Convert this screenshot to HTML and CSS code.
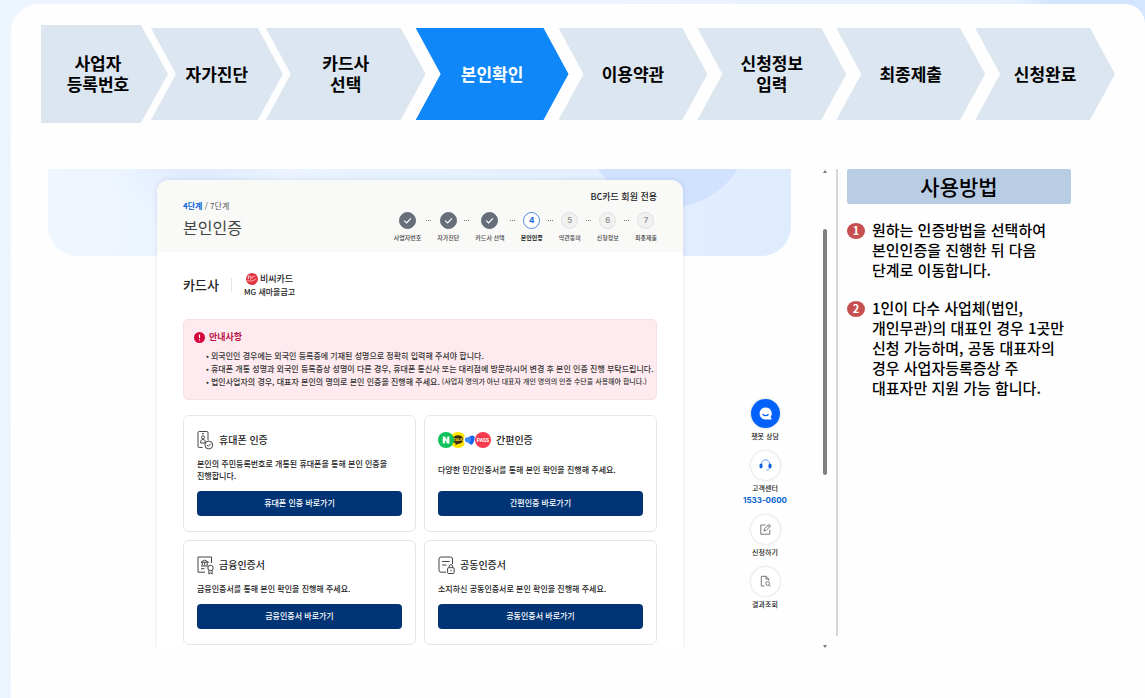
FILE: index.html
```html
<!DOCTYPE html>
<html lang="ko">
<head>
    <meta charset="UTF-8">
    <meta name="viewport" content="width=device-width, initial-scale=1.0">
    <title>본인확인 - 사용방법</title>
    <link rel="stylesheet" href="styles.css">
</head>
<body>
    <div class="sheet">
        <ol class="flow">
            <li class="flow-step first">사업자<br>등록번호</li>
            <li class="flow-step second">자가진단</li>
            <li class="flow-step third">카드사<br>선택</li>
            <li class="flow-step active" aria-current="step">본인확인</li>
            <li class="flow-step">이용약관</li>
            <li class="flow-step">신청정보<br>입력</li>
            <li class="flow-step">최종제출</li>
            <li class="flow-step last">신청완료</li>
        </ol>

        <div class="workspace">
            <div class="stage">
                <div class="hero"></div>
                <main class="card">
                    <header class="card-header">
                        <div class="card-title">
                            <p class="step-count"><strong>4단계</strong> / 7단계</p>
                            <h1>본인인증</h1>
                        </div>
                        <div class="card-progress">
                            <p class="member">BC카드 회원 전용</p>
                            <ol class="progress">
                                <li class="done"><span class="dot"><svg viewBox="0 0 17 17"><path d="M5.2 8.6l2.4 2.3 4.3-4.6"/></svg></span>사업자번호</li>
                                <li class="sep" aria-hidden="true"></li>
                                <li class="done"><span class="dot"><svg viewBox="0 0 17 17"><path d="M5.2 8.6l2.4 2.3 4.3-4.6"/></svg></span>자가진단</li>
                                <li class="sep" aria-hidden="true"></li>
                                <li class="done"><span class="dot"><svg viewBox="0 0 17 17"><path d="M5.2 8.6l2.4 2.3 4.3-4.6"/></svg></span>카드사 선택</li>
                                <li class="sep" aria-hidden="true"></li>
                                <li class="current"><span class="dot">4</span>본인인증</li>
                                <li class="sep" aria-hidden="true"></li>
                                <li><span class="dot">5</span>약관동의</li>
                                <li class="sep" aria-hidden="true"></li>
                                <li><span class="dot">6</span>신청정보</li>
                                <li class="sep" aria-hidden="true"></li>
                                <li><span class="dot">7</span>최종제출</li>
                            </ol>
                        </div>
                    </header>

                    <div class="card-body">
                        <div class="issuer">
                            <h2>카드사</h2>
                            <div class="issuer-name">
                                <span class="issuer-brand">
                                    <svg class="bc-logo" viewBox="0 0 12 12">
                                        <circle cx="6" cy="6" r="6" fill="#e2343f"/>
                                        <path d="M2.400 6V3.200c1.800-.7 3 .2 2.200 1.300 1.200.2 1 1.700-.6 1.700M8.600 3.600c-1.500-.6-2.600.4-2.300 1.400" fill="none" stroke="#fff" stroke-width=".8"/>
                                        <path d="M1.200 7.200c2.800 1.500 6.200.9 9-1.600" fill="none" stroke="#fff" stroke-width=".6"/>
                                    </svg>
                                    비씨카드
                                </span>
                                <span class="issuer-bank">MG 새마을금고</span>
                            </div>
                        </div>

                        <section class="notice">
                            <h3>
                                <svg viewBox="0 0 11 11"><circle cx="5.5" cy="5.5" r="5.5" fill="#d3073c"/><path d="M5.5 2.600v3.400M5.5 7.300v1.200" stroke="#fff" stroke-width="1.1"/></svg>
                                안내사항
                            </h3>
                            <ul>
                                <li>외국인인 경우에는 외국인 등록증에 기재된 성명으로 정확히 입력해 주셔야 합니다.</li>
                                <li>휴대폰 개통 성명과 외국인 등록증상 성명이 다른 경우, 휴대폰 통신사 또는 대리점에 방문하시어 변경 후 본인 인증 진행 부탁드립니다.</li>
                                <li>법인사업자의 경우, 대표자 본인의 명의로 본인 인증을 진행해 주세요. <small>(사업자 명의가 아닌 대표자 개인 명의의 인증 수단을 사용해야 합니다.)</small></li>
                            </ul>
                        </section>

                        <div class="methods">
                            <section class="method">
                                <h3>
                                    <svg class="line-icon" viewBox="0 0 17 20">
                                        <path d="M5.5 17.5H2.2A1.2 1.2 0 0 1 1 16.300V2.700a1.2 1.2 0 0 1 1.2-1.2h7.600A1.2 1.2 0 0 1 11 2.700v7.600M5 3.800h2"/>
                                        <circle cx="6" cy="7.400" r="1.5"/>
                                        <path d="M3.700 13v-1.2c0-1.600 1-2.300 2.300-2.300s2.300.7 2.300 2.300V13z"/>
                                        <circle cx="11.800" cy="15" r="3.900"/>
                                        <path d="M9.900 15l1.400 1.400 2.5-2.700"/>
                                    </svg>
                                    휴대폰 인증
                                </h3>
                                <p>본인의 주민등록번호로 개통된 휴대폰을 통해 본인 인증을 진행합니다.</p>
                                <button type="button">휴대폰 인증 바로가기</button>
                            </section>

                            <section class="method">
                                <h3>
                                    <svg class="brand-icons" viewBox="0 0 53 18">
                                        <circle cx="20" cy="9" r="8" fill="#fee500"/>
                                        <ellipse cx="20" cy="8.5" rx="5.3" ry="4.2" fill="#3a2a1a"/>
                                        <path d="M18 11l-.6 3.2 3.6-2z" fill="#3a2a1a"/>
                                        <text x="20" y="10" font-size="4" fill="#fee500">TALK</text>
                                        <circle cx="8" cy="9" r="8" fill="#0ec25c"/>
                                        <path d="M4.7 12.5v-7h2.2l2.3 3.5V5.5h2.2v7H9.200L6.900 9v3.5z" fill="#fff"/>
                                        <circle cx="33" cy="9" r="7.5" fill="#fff"/>
                                        <path d="M27 9c0-1.800 1-2.300 2.500-2.400 1.200 0 2.100-.6 2.900-1.500 1.500-1.400 4-.6 4.200 1.200.3 2.300-.5 4.800-2.100 6.700-1.200 1.400-2.400.3-3.400-.7C29.500 10.700 27 11 27 9z" fill="#1766ef"/>
                                        <path d="M27 9c0-1.800 1-2.300 2.500-2.400 1.200 0 2.100-.6 2.900-1.500l.6 3.700-1.900 3.500C29.500 10.700 27 11 27 9z" fill="#3f8cf8"/>
                                        <circle cx="45" cy="9" r="8" fill="#f53c4e"/>
                                        <text x="45" y="11" font-size="5" fill="#fff">PASS</text>
                                    </svg>
                                    간편인증
                                </h3>
                                <p>다양한 민간인증서를 통해 본인 확인을 진행해 주세요.</p>
                                <button type="button">간편인증 바로가기</button>
                            </section>

                            <section class="method">
                                <h3>
                                    <svg class="line-icon" viewBox="0 0 17 20">
                                        <path d="M8 17.2H1V2h13.5v6M4 13.700h3.5"/>
                                        <path d="M4 7.200L7.700 5l3.800 2.200zM5.300 7.500v3M7.700 7.500v3M10.200 7.500v3M4 11h7.5"/>
                                        <circle cx="13.5" cy="13" r="2.700"/>
                                        <path d="M11.900 15.300v3.700l1.600-1 1.600 1v-3.700"/>
                                    </svg>
                                    금융인증서
                                </h3>
                                <p>금융인증서를 통해 본인 확인을 진행해 주세요.</p>
                                <button type="button">금융인증서 바로가기</button>
                            </section>

                            <section class="method">
                                <h3>
                                    <svg class="line-icon" viewBox="0 0 17 20">
                                        <path d="M8 17.2H3a2 2 0 0 1-2-2V4a2 2 0 0 1 2-2h9.500a2 2 0 0 1 2 2v5M4 6.500h7.500M4 10h4.500"/>
                                        <rect x="9.600" y="12.700" width="6.600" height="5.800" rx="1"/>
                                        <path d="M11.100 12.700v-1.200a1.800 1.800 0 0 1 3.600 0v1.200M12.900 15v1.300"/>
                                    </svg>
                                    공동인증서
                                </h3>
                                <p>소지하신 공동인증서로 본인 확인을 진행해 주세요.</p>
                                <button type="button">공동인증서 바로가기</button>
                            </section>
                        </div>
                    </div>
                </main>

                <nav class="quick" aria-label="빠른 메뉴">
                    <a href="#chat">
                        <span class="quick-icon chat">
                            <svg viewBox="0 0 29 29">
                                <path d="M14.500 8.500a6 6 0 1 0 0 12h6v-1.300l-.9-1.200a6 6 0 0 0-5.100-9.500z" fill="#fff"/>
                                <path d="M12 15.500c1.400 1.600 3.900 1.600 5.200 0" fill="none" stroke="#0561fc" stroke-width="1.2" stroke-linecap="round"/>
                            </svg>
                        </span>
                        챗봇 상담
                    </a>
                    <a href="#center">
                        <span class="quick-icon">
                            <svg viewBox="0 0 29 29">
                                <path d="M10.300 14v-.5a4.200 4.700 0 0 1 8.400 0v.5M18.700 16.500c0 1.800-1.500 2.600-3.300 2.600" fill="none" stroke="#5c9bf5" stroke-width="1"/>
                                <rect x="8.500" y="12.700" width="3" height="4.600" rx="1.400" fill="#0b5fe0"/>
                                <rect x="17.500" y="12.700" width="3" height="4.600" rx="1.400" fill="#0b5fe0"/>
                            </svg>
                        </span>
                        고객센터
                        <strong>1533-0600</strong>
                    </a>
                    <a href="#apply">
                        <span class="quick-icon">
                            <svg viewBox="0 0 29 29">
                                <path d="M14.500 10h-4.700v9.200h9V14.800M13 16l.4-2.200 4.500-4.500 1.700 1.700-4.500 4.500zM16.800 10.400l1.700 1.700" fill="none" stroke="#666" stroke-width=".9"/>
                            </svg>
                        </span>
                        신청하기
                    </a>
                    <a href="#result">
                        <span class="quick-icon">
                            <svg viewBox="0 0 29 29">
                                <path d="M13.500 19h-3.200V9.300h4.700l2.800 2.800v1.500M15 9.300v2.800h2.800" fill="none" stroke="#666" stroke-width=".9"/>
                                <circle cx="16.600" cy="16.500" r="1.800" fill="none" stroke="#666" stroke-width=".9"/>
                                <path d="M18 17.900l1.600 1.600" stroke="#666" stroke-width=".9"/>
                            </svg>
                        </span>
                        결과조회
                    </a>
                </nav>
            </div>

            <div class="scrollbar" aria-hidden="true">
                <span class="arrow-up"></span>
                <span class="thumb"></span>
                <span class="arrow-down"></span>
            </div>

            <aside class="guide">
                <h2>사용방법</h2>
                <ol>
                    <li><span class="num">1</span><p>원하는 인증방법을 선택하여 본인인증을 진행한 뒤 다음 단계로 이동합니다.</p></li>
                    <li><span class="num">2</span><p>1인이 다수 사업체(법인, 개인무관)의 대표인 경우 1곳만 신청 가능하며, 공동 대표자의 경우 사업자등록증상 주 대표자만 지원 가능 합니다.</p></li>
                </ol>
            </aside>
        </div>
    </div>
</body>
</html>
```
FILE: styles.css
```css
* {
    box-sizing: border-box;
}
body {
    margin: 0;
    min-height: 100vh;
    display: flex;
    padding: 4px 0 0 11px;
    background: linear-gradient(100deg, #edf5ff 0%, #e8f2ff 80%, #d4e5fe 83%);
    font-family: "Noto Sans CJK KR", "Noto Sans", sans-serif;
    color: #222;
    word-break: keep-all;
}
h1, h2, h3, p, ol, ul {
    margin: 0;
    padding: 0;
}
ol, ul {
    list-style: none;
}
.sheet {
    flex: 1;
    min-width: 0;
    padding-top: 21px;
    background-color: #fefefe;
    border-radius: 28px 20px 0 0;
}

/* process arrows */
.flow {
    display: flex;
    align-items: center;
    margin: 0 30px;
}
.flow-step {
    flex: 1 1 149px;
    height: 92px;
    margin-left: -10px;
    padding-bottom: 2px;
    display: flex;
    align-items: center;
    justify-content: center;
    text-align: center;
    background-color: #dce6f0;
    color: #000;
    font-size: 17px;
    font-weight: bold;
    line-height: 21px;
    clip-path: polygon(0 0, calc(100% - 25px) 0, 100% 50%, calc(100% - 25px) 100%, 0 100%, 25px 50%);
}
.flow-step.first {
    flex-basis: 127px;
    height: 98px;
    margin-left: 0;
    padding-right: 13px;
    clip-path: polygon(0 0, calc(100% - 27px) 0, 100% 50%, calc(100% - 27px) 100%, 0 100%);
}
.flow-step.second {
    flex-basis: 132px;
    margin-left: -17px;
}
.flow-step.third {
    flex-basis: 160px;
    margin-left: -17px;
}
.flow-step.active {
    flex-basis: 153px;
    background-color: #1087f8;
    color: #fff;
}
.flow-step.last {
    flex-basis: 140px;
}

.workspace {
    display: flex;
    margin: 46px 74px 0 37px;
}
.stage {
    position: relative;
    flex: 1;
    min-width: 0;
    display: grid;
    grid-template-columns: minmax(0, 1fr);
    overflow: hidden;
}
.hero {
    grid-area: 1 / 1;
    height: 87px;
    border-radius: 0 0 30px 30px;
    background:
        radial-gradient(circle at 620px -44px, #d0e2fe 82px, transparent 83px),
        radial-gradient(circle at 150px -20px, #dfebfe 20px, transparent 90px),
        linear-gradient(90deg, #eff6ff, #e6f1ff 60%, #dfecfe);
}

/* service card */
.card {
    grid-area: 1 / 1;
    margin: 11px 108px 0 109px;
    background-color: #fff;
    border-radius: 12px 12px 0 0;
    box-shadow: 0 0 5px rgba(60, 80, 120, 0.14);
}
.card-header {
    display: flex;
    justify-content: space-between;
    padding: 10px 26px;
    background-color: #f9f9f8;
    border-radius: 12px 12px 0 0;
}
.card-title {
    padding-top: 10px;
}
.step-count {
    font-size: 8px;
    line-height: 12px;
    color: #555;
}
.step-count strong {
    color: #0b62d6;
}
.card-title h1 {
    margin-top: 3px;
    font-size: 16px;
    line-height: 24px;
    font-weight: normal;
    color: #444;
}
.member {
    font-size: 9px;
    line-height: 14px;
    font-weight: 500;
    text-align: right;
}
.progress {
    display: flex;
    margin-top: 8px;
}
.progress li {
    display: flex;
    flex-direction: column;
    align-items: center;
    gap: 4px;
    font-size: 6px;
    line-height: 9px;
    font-weight: 500;
    color: #444;
    white-space: nowrap;
}
.progress .sep {
    width: 5px;
    height: 1px;
    margin: 8px 6px 0 5px;
    border-top: 1px dotted #777;
}
.dot {
    width: 17px;
    height: 17px;
    display: flex;
    align-items: center;
    justify-content: center;
    border: 1px solid #e0e0e0;
    border-radius: 50%;
    background-color: #f1f1f1;
    color: #888;
    font-family: Inter, sans-serif;
    font-size: 8px;
}
.dot svg {
    flex: none;
    width: 17px;
    height: 17px;
    fill: none;
    stroke: #fff;
    stroke-width: 1.2;
}
.done .dot {
    background-color: #666e79;
    border-color: #666e79;
}
.progress .current {
    color: #111;
    font-weight: bold;
}
.current .dot {
    background-color: #fff;
    border-color: #4a8be0;
    color: #0b62d6;
}

.card-body {
    padding: 20px 26px 3px;
}
.issuer {
    display: flex;
    align-items: center;
}
.issuer h2 {
    padding-right: 12px;
    border-right: 1px solid #e4e4e4;
    font-size: 13px;
    line-height: 14px;
    font-weight: 500;
}
.issuer-name {
    display: flex;
    flex-direction: column;
    align-items: center;
    padding-left: 12px;
    line-height: 13px;
    font-weight: 500;
}
.issuer-brand {
    display: flex;
    align-items: center;
    gap: 2px;
    font-size: 9px;
}
.issuer-bank {
    font-size: 8px;
}
.bc-logo {
    width: 12px;
    height: 12px;
}

.notice {
    margin-top: 21px;
    padding: 10px 2px 11px 10px;
    border: 1px solid #f6dfe5;
    border-radius: 5px;
    background-color: #ffebef;
}
.notice h3 {
    display: flex;
    align-items: center;
    gap: 4px;
    font-size: 9px;
    line-height: 14px;
    color: #b91348;
}
.notice h3 svg {
    width: 11px;
    height: 11px;
}
.notice ul {
    margin-top: 5px;
    padding-left: 12px;
}
.notice li {
    display: flex;
    font-size: 8px;
    line-height: 13px;
    font-weight: 500;
    color: #333;
    white-space: nowrap;
}
.notice li::before {
    content: "•";
    width: 5px;
}
.notice small {
    margin-left: 2px;
    font-size: 7px;
}

.methods {
    display: grid;
    grid-template-columns: 1fr 1fr;
    gap: 8px;
    margin-top: 15px;
}
.method {
    display: flex;
    flex-direction: column;
    padding: 14px 13px 15px;
    border: 1px solid #e6e6e6;
    border-radius: 6px;
}
.method h3 {
    display: flex;
    align-items: center;
    gap: 5px;
    height: 20px;
    font-size: 10px;
    line-height: 18px;
    font-weight: 500;
}
.line-icon {
    width: 17px;
    height: 20px;
    fill: none;
    stroke: #444;
    stroke-width: 1;
}
.brand-icons {
    width: 53px;
    height: 18px;
    font-family: Roboto, sans-serif;
    font-weight: bold;
    text-anchor: middle;
}
.method p {
    flex: 1;
    display: flex;
    align-items: center;
    margin: 8px 0 9px;
    font-size: 8px;
    line-height: 12px;
    font-weight: 500;
}
.method button {
    height: 25px;
    padding: 0 0 2px;
    border: 0;
    border-radius: 4px;
    background-color: #003475;
    color: #fff;
    font-family: inherit;
    font-size: 8px;
    font-weight: 500;
    cursor: pointer;
}

/* floating menu over the page */
.quick {
    position: absolute;
    top: 230px;
    right: 0;
    width: 52px;
    display: flex;
    flex-direction: column;
    gap: 9px;
}
.quick a {
    display: flex;
    flex-direction: column;
    align-items: center;
    color: #222;
    font-size: 7px;
    line-height: 12px;
    font-weight: 500;
    text-decoration: none;
}
.quick-icon {
    width: 29px;
    height: 29px;
    margin-bottom: 2px;
    border-radius: 50%;
    background-color: #fff;
    box-shadow: 0 0 3px rgba(0, 0, 0, 0.2);
}
.quick-icon svg {
    display: block;
}
.quick-icon.chat {
    background-color: #0561fc;
}
.quick strong {
    font-family: Inter, sans-serif;
    font-size: 8px;
    color: #0a62d0;
}

.scrollbar {
    width: 4px;
    margin-left: 32px;
    display: flex;
    flex-direction: column;
}
.arrow-up,
.arrow-down {
    border: 2px solid transparent;
}
.arrow-up {
    border-top: 0;
    border-bottom: 3px solid #777;
    margin-top: 1px;
}
.arrow-down {
    border-bottom: 0;
    border-top: 3px solid #777;
    margin-top: auto;
}
.thumb {
    height: 246px;
    margin-top: 56px;
    border-radius: 2px;
    background-color: #7f7f7f;
}

.guide {
    position: relative;
    width: 244px;
    padding-left: 20px;
}
.guide::before {
    content: "";
    position: absolute;
    top: 0;
    bottom: 12px;
    left: 9px;
    width: 2px;
    background-color: #d6d6d6;
}
.guide h2 {
    background-color: #b8cce4;
    border-radius: 2px;
    color: #000;
    font-size: 21px;
    line-height: 35px;
    font-weight: 500;
    text-align: center;
}
.guide ol {
    margin-top: 16px;
}
.guide li {
    display: flex;
    gap: 7px;
    margin-bottom: 18px;
    color: #000;
    font-size: 15px;
    line-height: 20px;
    font-weight: 500;
}
.guide p {
    flex: 1;
}
.num {
    width: 18px;
    height: 16px;
    margin-top: 3px;
    border-radius: 50%;
    background-color: #c84f50;
    color: #fff;
    font-size: 11px;
    line-height: 15px;
    font-weight: bold;
    text-align: center;
}
```
